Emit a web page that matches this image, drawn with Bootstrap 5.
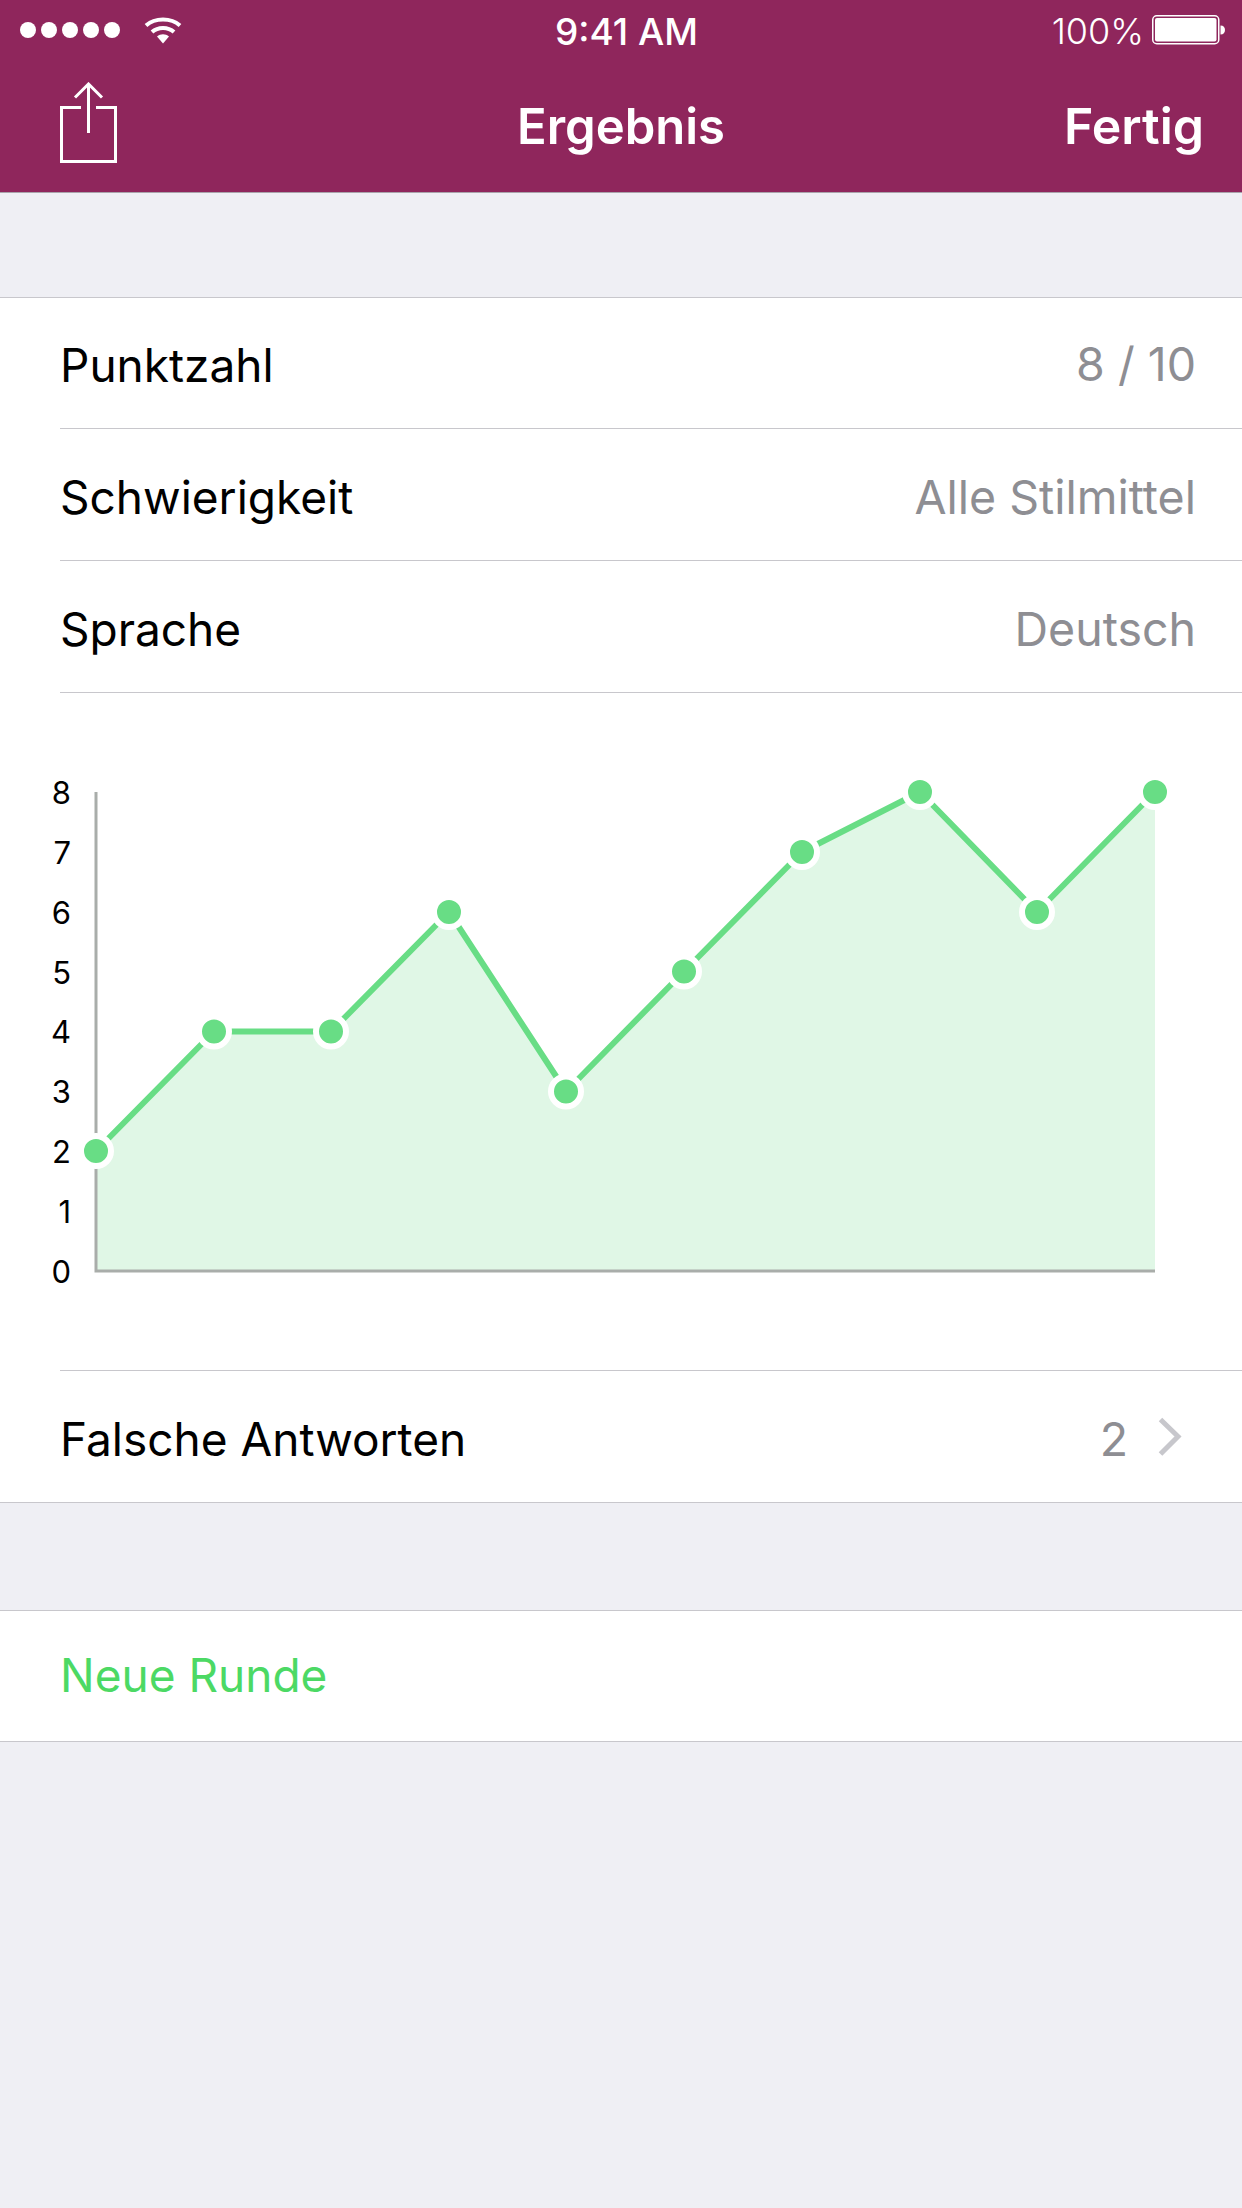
<!DOCTYPE html>
<html lang="de">
<head>
<meta charset="utf-8">
<title>Ergebnis</title>
<link href="https://cdn.jsdelivr.net/npm/bootstrap@5.3.0/dist/css/bootstrap.min.css" rel="stylesheet">
<style>
html,body{height:100%}
body{background:#efeff4;font-family:Inter,"Liberation Sans",sans-serif;color:#000;min-height:2208px}
.top-head{background:#8f265c;color:#fff;height:193px;border-bottom:1px solid #a9a4ab}
.status-strip{height:60px;padding:0 17px 0 20px;display:grid;grid-template-columns:1fr auto 1fr;align-items:center}
.status-time{font-size:37px;font-weight:500;line-height:1;padding:2px 0 0 8px}
.status-pct{font-size:36px;font-weight:300;line-height:1;padding-top:2px}
.nav-strip{height:132px;display:grid;grid-template-columns:1fr auto 1fr;align-items:center;padding:0 38px 6px 38px}
.share-mark{margin-left:22px}
.nav-title{font-size:49px;font-weight:600;line-height:1;padding-top:6px}
.nav-done{font-size:50px;font-weight:600;line-height:1;padding-top:6px}
.cell-group{background:#fff;border-top:1px solid #c8c7cc;border-bottom:1px solid #c8c7cc;border-radius:0}
.cell-group .list-group-item{background:transparent;color:#000;border:0;border-bottom:1px solid #c8c7cc;border-radius:0;margin-left:60px;padding:5px 46px 0 0;height:132px;font-size:46px;line-height:1}
.cell-group .list-group-item:first-child{height:131px;padding-top:3px}
.cell-group .list-group-item:last-child{border-bottom:0;height:131px}
.cell-value{color:#8e8e93;font-size:46.500px}
.cell-group .chart-cell{height:678px;padding:0;margin-left:0;border-bottom:0}
.chart-cell svg{display:block;width:1242px;height:677px}
.chart-rule{height:1px;background:#c8c7cc;margin-left:60px}
.axis-label{font-size:31px;fill:#000;text-anchor:end;font-family:Inter,"Liberation Sans",sans-serif}
.first-group{margin-top:104px}
.second-group{margin-top:107px}
.cell-group .list-group-item.go-green{color:#4cd964;height:130px;padding:0 46px 2px 0}
.cell-group .count-cell{padding-right:60px}
.count-side{gap:30px}
.chevron-mark{margin-bottom:5px}
</style>
</head>
<body>
<header class="top-head">
  <div class="status-strip">
    <div class="d-flex align-items-center gap-4">
      <svg width="100" height="20" viewBox="0 0 100 20" aria-hidden="true"><g fill="#fff"><circle cx="8" cy="10" r="8"/><circle cx="29" cy="10" r="8"/><circle cx="50" cy="10" r="8"/><circle cx="71" cy="10" r="8"/><circle cx="92" cy="10" r="8"/></g></svg>
      <svg width="38" height="28" viewBox="0 0 38 28" aria-hidden="true"><path d="M2 9.500C11 1.500 27 1.500 36 9.500" fill="none" stroke="#fff" stroke-width="4"/><path d="M8 16C14 10.500 24 10.500 30 16" fill="none" stroke="#fff" stroke-width="4"/><path d="M13 20.500C16.500 17.500 21.500 17.500 25 20.500L19 27.500Z" fill="#fff"/></svg>
    </div>
    <div class="status-time">9:41 AM</div>
    <div class="d-flex align-items-center justify-content-end gap-2">
      <span class="status-pct">100%</span>
      <svg width="73" height="30" viewBox="0 0 73 30" aria-hidden="true"><rect x=".75" y=".75" width="66" height="28" rx="4" fill="none" stroke="#fff" stroke-width="1.500"/><rect x="3" y="3" width="61.500" height="23.500" rx="2" fill="#fff"/><path d="M68.500 10.500c3 0 4.500 2 4.500 4.500s-1.500 4.500-4.500 4.500z" fill="#fff"/></svg>
    </div>
  </div>
  <div class="nav-strip">
    <div>
      <svg class="d-block share-mark" width="58" height="82" viewBox="0 0 58 82" aria-hidden="true"><g fill="none" stroke="#fff" stroke-width="3"><path d="M21 25.500H1.500V79.500H55.500V25.500H36"/><path d="M28.500 2V51"/><path d="M15 15.500L28.500 2L42 15.500"/></g></svg>
    </div>
    <div class="nav-title">Ergebnis</div>
    <div class="nav-done text-end">Fertig</div>
  </div>
</header>

<main>
  <div class="list-group list-group-flush cell-group first-group">
    <div class="list-group-item d-flex justify-content-between align-items-center"><span>Punktzahl</span><span class="cell-value">8 / 10</span></div>
    <div class="list-group-item d-flex justify-content-between align-items-center"><span>Schwierigkeit</span><span class="cell-value">Alle Stilmittel</span></div>
    <div class="list-group-item d-flex justify-content-between align-items-center"><span>Sprache</span><span class="cell-value">Deutsch</span></div>
    <div class="list-group-item chart-cell">
      <svg viewBox="0 693 1242 677" aria-label="Punkte je Runde">
        <path d="M96 1151L214 1031.500L331 1031.500L449 912L566 1091.500L684 971.500L802 852L920 792L1037 912L1155 792V1271H96Z" fill="#e0f7e6"/>
        <path d="M96 792V1271H1155" fill="none" stroke="#a9adaa" stroke-width="3"/>
        <path d="M96 1151L214 1031.500L331 1031.500L449 912L566 1091.500L684 971.500L802 852L920 792L1037 912L1155 792" fill="none" stroke="#68dd85" stroke-width="6" stroke-linejoin="round"/>
        <g fill="#68dd85" stroke="#fff" stroke-width="6">
          <circle cx="96" cy="1151" r="15"/><circle cx="214" cy="1031.500" r="15"/><circle cx="331" cy="1031.500" r="15"/><circle cx="449" cy="912" r="15"/><circle cx="566" cy="1091.500" r="15"/><circle cx="684" cy="971.500" r="15"/><circle cx="802" cy="852" r="15"/><circle cx="920" cy="792" r="15"/><circle cx="1037" cy="912" r="15"/><circle cx="1155" cy="792" r="15"/>
        </g>
        <g>
          <text class="axis-label" x="71" y="803.500">8</text><text class="axis-label" x="71" y="863.500">7</text><text class="axis-label" x="71" y="923.500">6</text><text class="axis-label" x="71" y="983.500">5</text><text class="axis-label" x="71" y="1043">4</text><text class="axis-label" x="71" y="1103">3</text><text class="axis-label" x="71" y="1163">2</text><text class="axis-label" x="71" y="1223">1</text><text class="axis-label" x="71" y="1283">0</text>
        </g>
      </svg>
      <div class="chart-rule"></div>
    </div>
    <div class="list-group-item d-flex justify-content-between align-items-center count-cell"><span>Falsche Antworten</span>
      <span class="d-flex align-items-center count-side"><span class="cell-value">2</span>
      <svg class="chevron-mark" width="24" height="40" viewBox="0 0 24 40" aria-hidden="true"><path d="M2.500 2.500L20 19.500L2.500 37" fill="none" stroke="#c7c7cc" stroke-width="5"/></svg></span>
    </div>
  </div>

  <div class="list-group list-group-flush cell-group second-group">
    <div class="list-group-item d-flex align-items-center go-green"><span>Neue Runde</span></div>
  </div>
</main>
<script src="https://cdn.jsdelivr.net/npm/bootstrap@5.3.0/dist/js/bootstrap.bundle.min.js"></script>
</body>
</html>
